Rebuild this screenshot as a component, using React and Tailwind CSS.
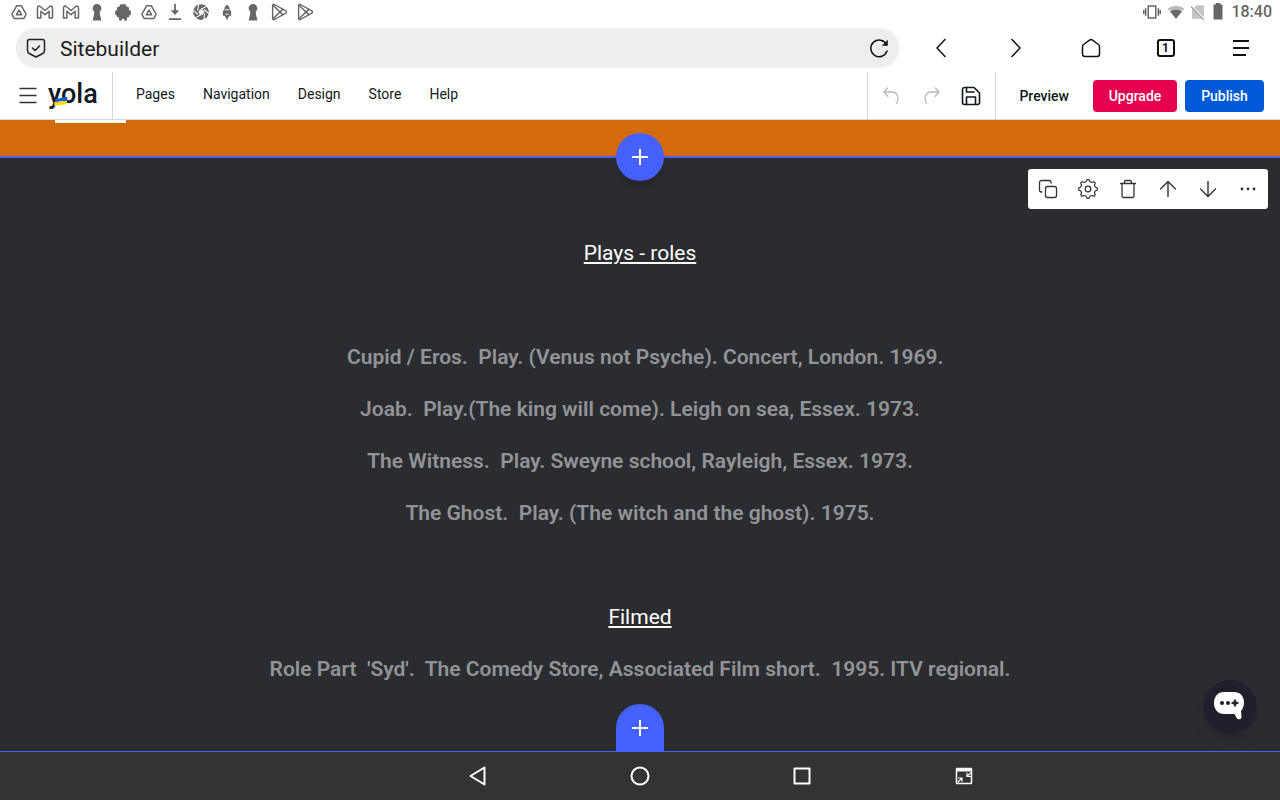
const menuItems = ["Pages", "Navigation", "Design", "Store", "Help"];

const roles = [
  "  Cupid / Eros.  Play. (Venus not Psyche). Concert, London. 1969.",
  "Joab.  Play.(The king will come). Leigh on sea, Essex. 1973.",
  "The Witness.  Play. Sweyne school, Rayleigh, Essex. 1973.",
  "The Ghost.  Play. (The witch and the ghost). 1975.",
];

const filmed = [
  "Role Part  'Syd'.  The Comedy Store, Associated Film short.  1995. ITV regional.",
];

function Icon({ size = 24, width = 1.5, className = "", children }) {
  return (
    <svg
      width={size}
      height={size}
      viewBox="0 0 24 24"
      fill="none"
      stroke="currentColor"
      strokeWidth={width}
      strokeLinecap="round"
      strokeLinejoin="round"
      className={`shrink-0 ${className}`}
      aria-hidden="true"
    >
      {children}
    </svg>
  );
}

function DriveIcon() {
  return (
    <Icon size={18} width={2}>
      <path d="M9 3.500h6l6.500 11.500-3 5.500h-13l-3-5.500z" />
      <path d="M12 9.500l3.500 6h-7z" />
    </Icon>
  );
}

function MailIcon() {
  return (
    <Icon size={18} width={2}>
      <path d="M2 20V6.500C2 4 4.500 3.500 6 5l6 5 6-5c1.500-1.500 4-1 4 1.500V20h-4.500v-9L12 15.500 6.500 11v9z" />
    </Icon>
  );
}

function KeyholeIcon() {
  return (
    <Icon size={18}>
      <path
        d="M12 2a5 5 0 0 0-3 9v4L7 22.500h10L15 15v-4A5 5 0 0 0 12 2z"
        fill="currentColor"
        stroke="currentColor"
      />
    </Icon>
  );
}

function BugIcon() {
  return (
    <Icon size={18}>
      <g fill="currentColor" stroke="none">
        <path d="M9 1.500h6l2 3 3 1.500v3l2.500 2v4L20 17v2h-3l-1 2H8l-1-2H4v-2l-2.500-2v-4L4 9V6l3-1.500z" />
        <rect x="6.500" y="18" width="4" height="5.500" rx="1.500" />
        <rect x="13.500" y="18" width="4" height="5.500" rx="1.500" />
      </g>
    </Icon>
  );
}

function DownloadIcon() {
  return (
    <Icon size={18} width={2.4}>
      <path d="M12 1v10" strokeLinecap="butt" />
      <path d="M6.500 9.500h11L12 16z" fill="currentColor" stroke="none" />
      <path d="M4 21.500h16" strokeLinecap="butt" />
    </Icon>
  );
}

function ShutterIcon() {
  return (
    <Icon size={18}>
      <circle cx="12" cy="12" r="10.500" fill="currentColor" stroke="none" />
      <path
        d="M9 2l-1.500 7.500M19.500 4.500l-7 3.500M22.500 14l-6-5M15.500 22.500L17 14.500M4.500 19.500l7-3.500M1.500 9.500l6 5.500"
        stroke="#fff"
        strokeWidth="1.400"
      />
      <path d="M10.500 8.500h4l2 3.500-2 3.500h-4l-2-3.500z" fill="#fff" stroke="none" />
    </Icon>
  );
}

function RocketIcon() {
  return (
    <Icon size={18}>
      <path
        d="M12 2c2.500 2 3.500 4 3.500 6.500L17.500 11v6H15l-1 2-2 3.500L10 19l-1-2H6.500v-6l2-2.500C8.500 6 9.500 4 12 2z"
        fill="currentColor"
        stroke="none"
      />
      <path d="M10 9h4M10.500 15h3" stroke="#fff" strokeWidth="1.300" />
    </Icon>
  );
}

function PlayIcon() {
  return (
    <Icon size={18} width={1.9}>
      <path d="M3.500 3.500C3.500 2 5 1.500 6 2l15 8.500c1.300.8 1.300 2.200 0 3L6 22c-1 .5-2.500 0-2.500-1.500z" />
      <path d="M4 3l13 12.500M4 21L17 8.500" />
    </Icon>
  );
}

const notifications = [
  DriveIcon,
  MailIcon,
  MailIcon,
  KeyholeIcon,
  BugIcon,
  DriveIcon,
  DownloadIcon,
  ShutterIcon,
  RocketIcon,
  KeyholeIcon,
  PlayIcon,
  PlayIcon,
];

function StatusBar() {
  return (
    <div className="flex h-6 items-center justify-between pl-1.5 pr-2 text-[#666]">
      <div className="flex">
        {notifications.map((Glyph, i) => (
          <span key={i} className="flex w-[26px] justify-center">
            <Glyph />
          </span>
        ))}
      </div>
      <div className="flex items-center">
        <Icon size={18} width={2}>
          <rect x="7" y="4" width="10" height="16" />
          <path d="M3.500 7v10M20.500 7v10M1 9.500v5M23 9.500v5" strokeLinecap="butt" />
        </Icon>
        <Icon size={18} className="ml-1.5">
          <path d="M12 21L1 7.500C7 2.500 17 2.500 23 7.500z" fill="#bdbdbd" stroke="none" />
          <path d="M12 21L4.500 11.500c4-3.500 11-3.500 15 0z" fill="currentColor" stroke="none" />
        </Icon>
        <Icon size={18} className="ml-1">
          <path d="M10 3h10v18H4V9z" fill="#c4c4c4" stroke="none" />
          <path d="M2 3l19 20" stroke="#fff" strokeWidth="3" />
          <path d="M3 5l16 17" stroke="#999" strokeWidth="1.500" />
        </Icon>
        <Icon size={18} className="ml-0.5">
          <path d="M9 0h6v2h3v20H6V2h3z" fill="currentColor" stroke="none" />
        </Icon>
        <span className="ml-1 text-base font-medium">18:40</span>
      </div>
    </div>
  );
}

function BrowserBar() {
  return (
    <div className="flex h-12 items-center pl-4 pr-px">
      <div className="flex h-10 flex-1 items-center rounded-full bg-[#eee] pl-2 pr-2">
        <Icon className="text-[#222]">
          <path d="M5.500 3.500h13a2 2 0 0 1 2 2v9c0 1.500-.5 2.200-1.700 3L12 21l-6.800-3.500c-1.200-.8-1.700-1.500-1.700-3v-9a2 2 0 0 1 2-2z" />
          <path d="M8.500 12l2.500 2.500L15.500 10" />
        </Icon>
        <input
          aria-label="Address"
          defaultValue="Sitebuilder"
          className="ml-3 min-w-0 flex-1 bg-transparent pt-1 text-[21px] text-[#1c1c1c] outline-none"
        />
        <button aria-label="Reload">
          <Icon>
            <path d="M19.500 8.500A8.300 8.300 0 1 0 20 15" />
            <path d="M20.500 4.500v5h-5z" fill="currentColor" strokeWidth="0.500" />
          </Icon>
        </button>
      </div>
      <div className="ml-1 flex pr-px">
        <button aria-label="Back" className="flex w-[75px] justify-center">
          <Icon>
            <path d="M16 3.500L8 12l8 8.500" />
          </Icon>
        </button>
        <button aria-label="Forward" className="flex w-[75px] justify-center">
          <Icon>
            <path d="M8 3.500l8 8.500-8 8.500" />
          </Icon>
        </button>
        <button aria-label="Home" className="flex w-[75px] justify-center">
          <Icon>
            <path d="M12 3.500q.8 0 1.500.6l6 4.400q1 .8 1 2V18q0 2.500-2.500 2.500H6Q3.500 20.500 3.500 18v-7.500q0-1.200 1-2l6-4.400q.7-.6 1.500-.6z" />
          </Icon>
        </button>
        <button aria-label="Tabs" className="flex w-[75px] items-center justify-center">
          <span className="flex size-[18px] items-center justify-center rounded-[3px] border-2 border-[#111] text-xs font-bold">
            1
          </span>
        </button>
        <button aria-label="Browser menu" className="flex w-[75px] justify-center">
          <Icon width={2}>
            <path d="M4 5h16M4 12h16M4 19h13" strokeLinecap="butt" />
          </Icon>
        </button>
      </div>
    </div>
  );
}

function Logo() {
  return (
    <a
      href="#"
      aria-label="yola"
      className="relative ml-2 pb-1 text-[27px] leading-8 font-medium text-[#101820]"
    >
      yola
      <svg
        width="14"
        height="10"
        viewBox="0 0 12 10"
        preserveAspectRatio="none"
        className="absolute left-1.5 top-[18px]"
        aria-hidden="true"
      >
        <path d="M1.500 2.500C5 3 7 .5 11.500 1v4C7 4.500 5 6 .5 6z" fill="#1f5fc4" />
        <path d="M.5 6C5 6 7 4.500 11.500 5L10 8.500C6 8.500 4 10 0 9.500z" fill="#ffd91a" />
      </svg>
    </a>
  );
}

function EditorBar() {
  return (
    <header className="flex h-12 items-stretch border-b border-[#d5d7da] bg-white text-sm text-[#101820]">
      <div className="flex w-[113px] items-center border-r border-[#d5d7da] pl-4">
        <button aria-label="Open menu" className="text-[#333]">
          <Icon>
            <path d="M3.500 4.500h17M3.500 11.500h17M3.500 18.500h17" strokeLinecap="butt" />
          </Icon>
        </button>
        <Logo />
      </div>
      <nav className="flex flex-1 items-center gap-7 pb-1 pl-[23px]">
        {menuItems.map((item) => (
          <button key={item}>{item}</button>
        ))}
      </nav>
      <div className="flex w-[129px] items-center justify-between border-x border-[#d5d7da] px-3">
        <button aria-label="Undo" className="text-[#b4b8bc]">
          <Icon width={1.3}>
            <path d="M7.500 4L4 8l4 4.500M4 8h7.500c5 0 6.500 3.500 6.500 6.500 0 2-.7 3.500-1.500 4.500" />
          </Icon>
        </button>
        <button aria-label="Redo" className="text-[#b4b8bc]">
          <Icon width={1.3}>
            <path d="M15.500 4L19 8l-4 4.500M19 8h-7.500C6.500 8 5 11.500 5 14.500c0 2 .7 3.500 1.500 4.500" />
          </Icon>
        </button>
        <button aria-label="Save">
          <Icon width={1.6}>
            <path d="M5.500 3.500H15l5.500 5.500v9.500a2 2 0 0 1-2 2h-13a2 2 0 0 1-2-2v-13a2 2 0 0 1 2-2z" />
            <path d="M7.500 3.500V8H15M7.500 20.500v-7.500h9v7.500" />
          </Icon>
        </button>
      </div>
      <div className="flex items-center pr-4 font-medium">
        <button className="pl-[23px] pr-6">Preview</button>
        <button className="h-8 w-[84px] rounded bg-[#e6004f] text-white">Upgrade</button>
        <button className="ml-2 h-8 w-[79px] rounded bg-[#005ad8] text-white">Publish</button>
      </div>
    </header>
  );
}

function BlockTools() {
  return (
    <div className="absolute right-3 top-[11px] grid h-10 grid-cols-6 rounded-[3px] bg-white text-[#333]">
      <button aria-label="Duplicate" className="flex w-10 items-center justify-center">
        <Icon width={1.3}>
          <rect x="9.500" y="9.500" width="11" height="11" rx="2" />
          <path d="M6 15H5.500a2 2 0 0 1-2-2V5.500a2 2 0 0 1 2-2H13a2 2 0 0 1 2 2V6" />
        </Icon>
      </button>
      <button aria-label="Settings" className="flex w-10 items-center justify-center">
        <Icon width={1.200}>
          <path d="M10 4.800L11 2.700h2l1 2.100 1.700.7 2.200-.8 1.400 1.400-.8 2.200.7 1.700 2.100 1v2l-2.100 1-.7 1.700.8 2.200-1.400 1.400-2.200-.8-1.700.7-1 2.100h-2l-1-2.100-1.700-.7-2.200.8-1.400-1.400.8-2.200-.7-1.700-2.100-1v-2l2.100-1 .7-1.700-.8-2.200 1.400-1.400 2.200.8z" />
          <circle cx="12" cy="12" r="2.800" />
        </Icon>
      </button>
      <button aria-label="Delete" className="flex w-10 items-center justify-center">
        <Icon width={1.3}>
          <path d="M4.500 6.500h15M6 6.500V19a1.500 1.500 0 0 0 1.500 1.500h9A1.500 1.500 0 0 0 18 19V6.500M8.500 6.500V5A1.500 1.500 0 0 1 10 3.500h4A1.500 1.500 0 0 1 15.500 5v1.500" />
        </Icon>
      </button>
      <button aria-label="Move up" className="flex w-10 items-center justify-center">
        <Icon width={1.4}>
          <path d="M12 19.500v-15M4.500 12L12 4.500l7.500 7.500" />
        </Icon>
      </button>
      <button aria-label="Move down" className="flex w-10 items-center justify-center">
        <Icon width={1.4}>
          <path d="M12 4.500v15M4.500 12l7.500 7.500 7.500-7.500" />
        </Icon>
      </button>
      <button aria-label="More" className="flex w-10 items-center justify-center">
        <Icon>
          <g fill="currentColor" stroke="none">
            <circle cx="6" cy="12" r="1.400" />
            <circle cx="12" cy="12" r="1.400" />
            <circle cx="18" cy="12" r="1.400" />
          </g>
        </Icon>
      </button>
    </div>
  );
}

function PlusIcon() {
  return (
    <Icon width={2}>
      <path d="M12 4v16M4 12h16" strokeLinecap="butt" />
    </Icon>
  );
}

function ContentBlock() {
  return (
    <section className="relative flex-1 border-b border-t-2 border-[#4661fb] bg-[#2b2c30] pb-14 pt-[69px]">
      <button
        aria-label="Add block above"
        className="absolute -top-[25px] left-1/2 flex size-12 -translate-x-1/2 items-center justify-center rounded-full bg-[#4661fb] text-white shadow-lg"
      >
        <PlusIcon />
      </button>
      <BlockTools />
      <div className="text-center text-[21px] leading-[52px] font-semibold whitespace-pre-wrap text-[#929396]">
        <h2 className="mb-[52px] font-normal text-white underline">Plays - roles</h2>
        {roles.map((line) => (
          <p key={line}>{line}</p>
        ))}
        <h2 className="mt-[52px] font-normal text-white underline">Filmed</h2>
        {filmed.map((line) => (
          <p key={line}>{line}</p>
        ))}
      </div>
      <button
        aria-label="Add block below"
        className="absolute -bottom-px left-1/2 flex size-12 -translate-x-1/2 items-center justify-center rounded-t-full bg-[#4661fb] text-white"
      >
        <PlusIcon />
      </button>
      <button
        aria-label="Open chat"
        className="absolute bottom-[17px] right-[23px] flex size-[54px] items-center justify-center rounded-full bg-[#1f202b] pr-0.5 pb-0.5 shadow-lg"
      >
        <svg width="32" height="30" viewBox="0 0 32 30" aria-hidden="true">
          <path
            d="M11 1h10c6 0 10 4 10 10.500 0 4-1.500 6.500-3 8.500l.5 6c0 2.500-3.500 3.300-4.800 1L21.500 23H11C5 23 1 18.500 1 12S5 1 11 1z"
            fill="#fff"
          />
          <circle cx="9" cy="12" r="2" fill="#1f202b" />
          <circle cx="15" cy="12" r="2" fill="#1f202b" />
          <path d="M22 8.500l1 2.500 2.500 1-2.500 1-1 2.500-1-2.500-2.500-1 2.500-1z" fill="#1f202b" stroke="#1f202b" />
        </svg>
      </button>
    </section>
  );
}

function SystemNav() {
  return (
    <nav className="h-12 bg-[#333] text-white">
      <div className="mx-auto grid h-full max-w-[810px] grid-cols-5 items-center justify-items-center">
        <button aria-label="System back" className="col-start-2">
          <Icon width={2}>
            <path d="M18.500 3.500v17L4.500 12z" />
          </Icon>
        </button>
        <button aria-label="System home">
          <Icon width={2}>
            <circle cx="12" cy="12" r="8.500" />
          </Icon>
        </button>
        <button aria-label="Recent apps">
          <Icon width={2}>
            <rect x="4.500" y="4.500" width="15" height="15" />
          </Icon>
        </button>
        <button aria-label="Shrink window">
          <Icon>
            <rect x="4.500" y="4.500" width="15" height="15" rx="0.500" />
            <path d="M4 4h16v3.500H4z" fill="currentColor" stroke="none" />
            <path d="M6 18l4-4M6.500 14H10v3.500M18.500 9l-3.500 3.500M15 9v3.500h3.500" strokeWidth="1.100" />
          </Icon>
        </button>
      </div>
    </nav>
  );
}

export default function App() {
  return (
    <div className="flex min-h-screen flex-col bg-white font-['Roboto',sans-serif] text-[#111]">
      <StatusBar />
      <BrowserBar />
      <EditorBar />
      <div className="h-9 bg-[#d36b0d] pl-[55px]">
        <div className="h-[3px] w-[71px] bg-[#f6fbf0]" />
      </div>
      <ContentBlock />
      <SystemNav />
    </div>
  );
}
